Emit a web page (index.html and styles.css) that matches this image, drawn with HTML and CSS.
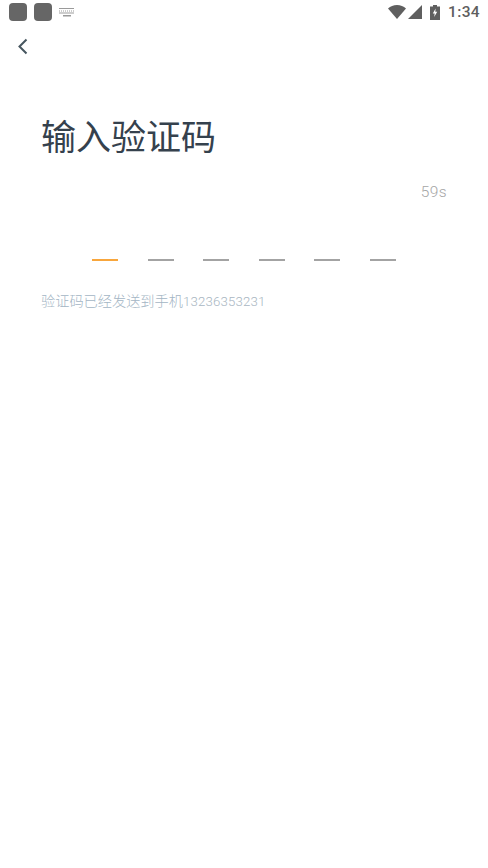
FILE: index.html
```html
<!DOCTYPE html>
<html lang="zh">
<head>
<meta charset="utf-8">
<title>输入验证码</title>
<link rel="stylesheet" href="styles.css">
</head>
<body>
<div class="screen">
  <header class="statusbar">
    <div class="status-left">
      <span class="app-dot"></span>
      <span class="app-dot"></span>
      <svg class="kbd" width="15" height="9" viewBox="0 0 15 9"><g fill="#9a9a9a"><path d="M0 0h15v1H0z"/><path d="M0 2.5h1v1H0zM2 2.5h1v1H2zM4 2.5h1v1H4zM6 2.5h1v1H6zM8 2.5h1v1H8zM10 2.5h1v1h-1zM12 2.5h1v1h-1zM14 2.5h1v1h-1z"/><path d="M0 4.5h15v1H0z"/><rect x="4" y="7" width="8" height="1.5"/></g></svg>
    </div>
    <div class="status-right">
      <svg class="wifi" width="18" height="14" viewBox="0 0 18 14"><path d="M0 3.5C2.4 1.3 5.5 0 9 0s6.6 1.3 9 3.5L9 14z" fill="#5f5f5f"/></svg>
      <svg class="signal" width="14" height="14" viewBox="0 0 14 14"><path d="M0 14L14 0v14z" fill="#5f5f5f"/></svg>
      <svg class="battery" width="10" height="15" viewBox="0 0 10 15"><path d="M3 0h4v1.5h3V15H0V1.5h3z" fill="#5f5f5f"/><path d="M5.6 3.5L2.8 8.6h1.9L4.2 12l3-5.2H5.3z" fill="#fff"/></svg>
      <span class="clock">1:34</span>
    </div>
  </header>
  <nav class="navbar">
    <svg class="back" width="11" height="17" viewBox="0 0 11 17"><path d="M9.5 1.5L2.5 8.5l7 7" fill="none" stroke="#46565f" stroke-width="2"/></svg>
  </nav>
  <main class="content">
    <h1 class="title">输入验证码</h1>
    <div class="timer">59s</div>
    <div class="code-row">
      <span class="slot active"></span>
      <span class="slot"></span>
      <span class="slot"></span>
      <span class="slot"></span>
      <span class="slot"></span>
      <span class="slot"></span>
    </div>
    <p class="hint">验证码已经发送到手机<span class="phone">13236353231</span></p>
  </main>
</div>
</body>
</html>
```
FILE: styles.css
```css
* { box-sizing: border-box; }
html, body { margin: 0; padding: 0; background: #fff; }
.screen {
  width: 488px;
  height: 868px;
  overflow: hidden;
  font-family: "Noto Sans CJK SC", "Noto Sans", sans-serif;
}
.statusbar {
  height: 24px;
  display: flex;
  justify-content: space-between;
  align-items: center;
  padding: 0 8px 0 9px;
}
.status-left, .status-right { display: flex; align-items: center; }
.app-dot {
  width: 18px;
  height: 18px;
  border-radius: 4px;
  background: #666;
  margin-right: 7px;
}
.wifi { margin-right: 2px; }
.signal { margin-right: 8px; }
.battery { margin-right: 8px; }
.clock {
  font-family: Roboto, sans-serif;
  font-size: 15.5px;
  font-weight: 500;
  letter-spacing: 0.35px;
  color: #5f5f5f;
}
.navbar {
  height: 44px;
  padding: 14px 0 0 17px;
}
.back { display: block; }
.content { padding: 0 41px; }
.title {
  margin: 43px 0 0;
  font-size: 35px;
  line-height: 48px;
  font-weight: 400;
  color: #35414d;
}
.timer {
  margin-top: 23px;
  text-align: right;
  font-family: Roboto, sans-serif;
  font-weight: 300;
  font-size: 15.5px;
  line-height: 20px;
  letter-spacing: 0.4px;
  color: #a6a6a6;
}
.code-row {
  margin-top: 57px;
  padding-left: 51px;
  display: flex;
  gap: 29.6px;
}
.slot {
  width: 26px;
  height: 2px;
  background: #a3a3a3;
}
.slot.active { background: #f8a63c; }
.hint {
  margin: 29px 0 0;
  font-size: 14.2px;
  font-weight: 300;
  line-height: 21px;
  color: #a3b5c4;
  white-space: nowrap;
}
.phone {
  font-family: Roboto, sans-serif;
  font-weight: 300;
  font-size: 13.2px;
  letter-spacing: 0.2px;
  color: #a9b6c2;
}
```
